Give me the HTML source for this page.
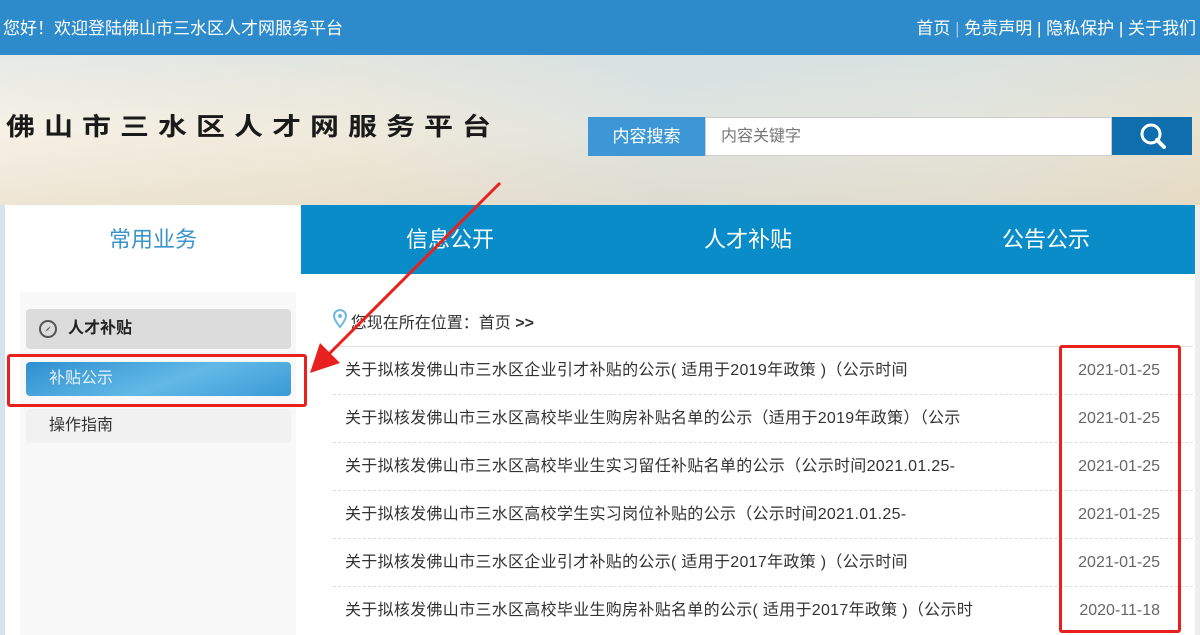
<!DOCTYPE html>
<html><head><meta charset="utf-8"><style>
*{margin:0;padding:0;box-sizing:border-box}
body{width:1200px;height:635px;overflow:hidden;background:#fff;font-family:"Liberation Sans","Noto Sans CJK SC",sans-serif;position:relative}
.top{position:absolute;left:0;top:0;width:1200px;height:55px;background:#2e8bcb;color:#fff;font-size:17px}
.top .l{position:absolute;left:3px;top:14px}
.top .r{position:absolute;right:4px;top:14px}
.banner{position:absolute;left:0;top:55px;width:1200px;height:150px;background:linear-gradient(90deg,#f6f1e6 0%,#efeadb 30%,#dfe4e0 55%,#e4e6dd 80%,#e9e2cf 100%)}
.banner:before{content:"";position:absolute;inset:0;background:linear-gradient(180deg,rgba(200,220,230,.35),rgba(255,255,255,0) 50%,rgba(220,200,170,.3))}
.logo{position:absolute;left:6px;top:104px;font-size:29px;font-weight:bold;color:#1a1a1a;letter-spacing:9px;font-family:"Noto Sans CJK SC",sans-serif;transform:scaleY(.85);transform-origin:left center}
.sl{position:absolute;left:588px;top:117px;width:117px;height:39px;background:#3d97d7;color:#fff;font-size:17px;line-height:39px;text-align:center}
.si{position:absolute;left:705px;top:117px;width:407px;height:39px;background:#fff;border:1px solid #ccc;color:#777;font-size:16px;line-height:37px;padding-left:15px}
.sb{position:absolute;left:1112px;top:117px;width:80px;height:38px;background:#0f6fae}
.tab{position:absolute;top:205px;height:69px;line-height:69px;font-size:22px;text-align:center;color:#fff}
.side{position:absolute;left:20px;top:292px;width:276px;height:343px;background:#f8f8f8}
.h{position:absolute;left:26px;top:309px;width:265px;height:40px;background:#dcdcdc;border-radius:4px;font-weight:bold;font-size:16px;line-height:40px;padding-left:42px;color:#222}
.a{position:absolute;left:26px;top:362px;width:265px;height:34px;background:linear-gradient(160deg,#2e8fd0,#62b9e6 55%,#3a9ad6);border-radius:4px;color:#e6f2fa;font-size:16px;line-height:34px;padding-left:23px}
.b{position:absolute;left:26px;top:409px;width:265px;height:34px;background:#f1f1f1;border-radius:4px;color:#333;font-size:16px;line-height:34px;padding-left:23px}
.crumb{position:absolute;left:333px;top:309px;font-size:16px;color:#333}
.row{position:absolute;left:333px;width:860px;height:48px;border-top:1px dashed #ddd;font-size:16px;color:#333;line-height:47px;padding-left:12px;letter-spacing:.3px}
.row span{position:absolute;right:33px;color:#666;letter-spacing:0}
.red{position:absolute;border:3px solid #e8211e;border-radius:3px}
</style></head><body>
<div class="top"><span class="l">您好！欢迎登陆佛山市三水区人才网服务平台</span><span class="r">首页 <span style="color:#9cc7ea">|</span> 免责声明 | 隐私保护 | 关于我们</span></div>
<div class="banner"></div>
<div class="logo">佛山市三水区人才网服务平台</div>
<div class="sl">内容搜索</div><div class="si">内容关键字</div>
<div class="sb"><svg width="80" height="38"><circle cx="39" cy="17" r="9" fill="none" stroke="#fff" stroke-width="3"/><line x1="45" y1="23" x2="52" y2="30" stroke="#fff" stroke-width="4" stroke-linecap="round"/></svg></div>
<div style="position:absolute;left:0;top:205px;width:5px;height:430px;background:#d5e3ec"></div>
<div class="tab" style="left:5px;width:296px;background:#fff;color:#3a93c9">常用业务</div>
<div class="tab" style="left:301px;width:894px;background:#0a8cc9"></div>
<div class="tab" style="left:301px;width:298px">信息公开</div>
<div class="tab" style="left:599px;width:298px">人才补贴</div>
<div class="tab" style="left:897px;width:298px">公告公示</div>
<div style="position:absolute;left:1195px;top:205px;width:5px;height:430px;background:#eee"></div>
<div class="side"></div>
<div class="h">人才补贴</div>
<svg style="position:absolute;left:38px;top:319px" width="20" height="20"><circle cx="10" cy="10" r="8" fill="none" stroke="#555" stroke-width="2"/><path d="M13 7 L9 10 L7 13 L11 10Z" fill="#555"/></svg>
<div class="a">补贴公示</div>
<div class="b">操作指南</div>
<svg style="position:absolute;left:332px;top:309px" width="16" height="20"><path d="M8 1a6 6 0 0 1 6 6c0 4-6 11-6 11S2 11 2 7a6 6 0 0 1 6-6z" fill="none" stroke="#6bb8e6" stroke-width="2"/><circle cx="8" cy="7" r="2" fill="#6bb8e6"/></svg>
<div class="crumb">&nbsp;&nbsp;&nbsp;&nbsp;您现在所在位置：首页 <b>&gt;&gt;</b></div>
<div class="row" style="top:346px;border-top:1px solid #ddd">关于拟核发佛山市三水区企业引才补贴的公示( 适用于2019年政策 )（公示时间<span>2021-01-25</span></div>
<div class="row" style="top:394px">关于拟核发佛山市三水区高校毕业生购房补贴名单的公示（适用于2019年政策）（公示<span>2021-01-25</span></div>
<div class="row" style="top:442px">关于拟核发佛山市三水区高校毕业生实习留任补贴名单的公示（公示时间2021.01.25-<span>2021-01-25</span></div>
<div class="row" style="top:490px">关于拟核发佛山市三水区高校学生实习岗位补贴的公示（公示时间2021.01.25-<span>2021-01-25</span></div>
<div class="row" style="top:538px">关于拟核发佛山市三水区企业引才补贴的公示( 适用于2017年政策 )（公示时间<span>2021-01-25</span></div>
<div class="row" style="top:586px">关于拟核发佛山市三水区高校毕业生购房补贴名单的公示( 适用于2017年政策 )（公示时<span>2020-11-18</span></div>
<div class="red" style="left:1059px;top:345px;width:122px;height:288px"></div>
<div class="red" style="left:7px;top:354px;width:300px;height:53px"></div>
<svg style="position:absolute;left:0;top:0" width="1200" height="635"><line x1="500" y1="183" x2="328" y2="355" stroke="#e8211e" stroke-width="3"/><polygon points="310,373 320,343 340,363" fill="#e8211e"/></svg>
</body></html>
